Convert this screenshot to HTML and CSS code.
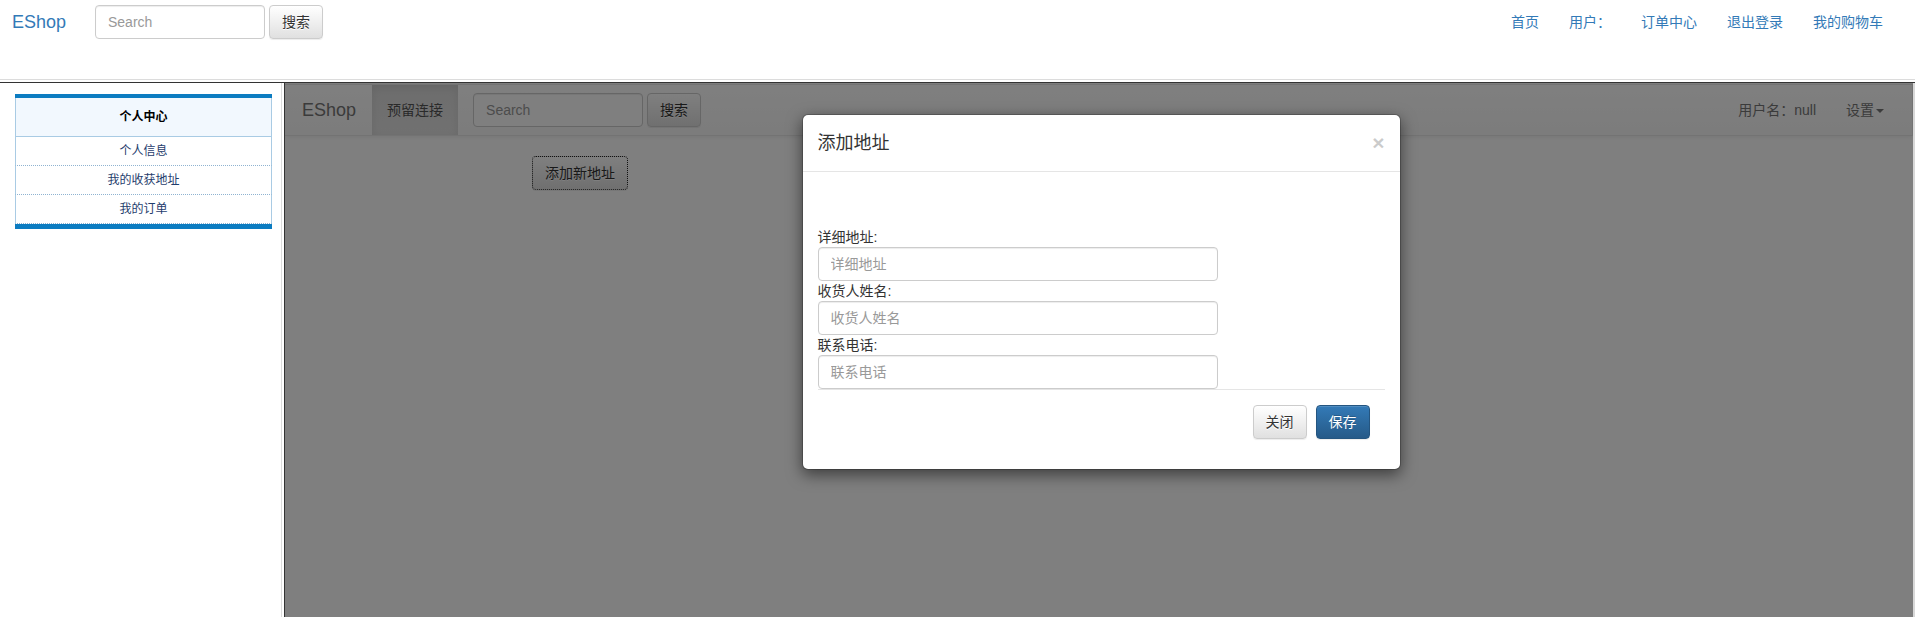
FILE: index.html
```html
<!DOCTYPE html>
<html lang="zh-CN">
<head>
<meta charset="utf-8">
<title>EShop</title>
<link rel="stylesheet" href="styles.css">
</head>
<body>
<div class="page">
  <header class="topbar">
    <div class="toprow">
      <a class="brand" href="#">EShop</a>
      <form class="topsearch">
        <input class="input search-input" type="text" placeholder="Search">
        <button class="btn btn-default" type="button">搜索</button>
      </form>
      <ul class="toplinks">
        <li><a href="#">首页</a></li>
        <li><a href="#">用户：</a></li>
        <li><a href="#">订单中心</a></li>
        <li><a href="#">退出登录</a></li>
        <li><a href="#">我的购物车</a></li>
      </ul>
    </div>
  </header>
  <div class="main">
    <aside class="leftpane">
      <div class="sidebox">
        <div class="sidehead">个人中心</div>
        <a class="sideitem" href="#">个人信息</a>
        <a class="sideitem" href="#">我的收获地址</a>
        <a class="sideitem" href="#">我的订单</a>
      </div>
    </aside>
    <section class="rightpane">
      <nav class="navbar">
        <a class="nav-brand" href="#">EShop</a>
        <a class="nav-item active" href="#">预留连接</a>
        <form class="navbar-form">
          <input class="input search-input" type="text" placeholder="Search">
          <button class="btn btn-default" type="button">搜索</button>
        </form>
        <div class="navbar-right">
          <span class="nav-item">用户名：null</span>
          <a class="nav-item" href="#">设置<span class="caret"></span></a>
        </div>
      </nav>
      <div class="content">
        <button class="btn btn-default btn-focus" type="button">添加新地址</button>
      </div>
      <div class="backdrop"></div>
      <div class="modal-layer">
        <div class="modal">
          <div class="modal-header">
            <h4 class="modal-title">添加地址</h4>
            <button class="close" type="button">×</button>
          </div>
          <form class="modal-body">
            <div class="spacer"></div>
            <label class="field-label">详细地址:</label>
            <input class="input field-input" type="text" placeholder="详细地址">
            <label class="field-label">收货人姓名:</label>
            <input class="input field-input" type="text" placeholder="收货人姓名">
            <label class="field-label">联系电话:</label>
            <input class="input field-input" type="text" placeholder="联系电话">
            <div class="modal-footer">
              <button class="btn btn-default" type="button">关闭</button>
              <button class="btn btn-primary" type="button">保存</button>
            </div>
          </form>
        </div>
      </div>
    </section>
  </div>
</div>
</body>
</html>
```

FILE: styles.css
```css
* { box-sizing: border-box; }
html, body {
  margin: 0;
  padding: 0;
  height: 617px;
  overflow: hidden;
  background: #fff;
  font-family: "Liberation Sans", "Noto Sans CJK SC", sans-serif;
  font-size: 14px;
  line-height: 20px;
  color: #333;
}
a { text-decoration: none; }
ul { list-style: none; margin: 0; padding: 0; }
form { margin: 0; }

.page {
  display: flex;
  flex-direction: column;
  height: 617px;
}

/* ---------- top frame ---------- */
.topbar {
  height: 83px;
  flex: none;
  border-bottom: 1px solid #333;
  box-shadow: inset 0 -2px 0 #fff, inset 0 -3px 0 #dcdcdc;
}
.toprow {
  display: flex;
  align-items: center;
  height: 44px;
  padding-right: 17px;
}
.brand {
  width: 95px;
  padding-left: 12px;
  font-size: 18px;
  line-height: 20px;
  color: #337ab7;
}
.topsearch {
  display: flex;
  gap: 4px;
}
.toplinks {
  display: flex;
  margin-left: auto;
}
.toplinks a {
  display: block;
  padding: 0 15px;
  color: #337ab7;
  font-size: 14px;
  line-height: 20px;
}

/* ---------- form controls ---------- */
.input {
  display: block;
  height: 34px;
  padding: 6px 12px;
  font-family: inherit;
  font-size: 14px;
  line-height: 20px;
  color: #555;
  background: #fff;
  border: 1px solid #ccc;
  border-radius: 4px;
  box-shadow: inset 0 1px 1px rgba(0,0,0,.075);
  outline: none;
}
.input::placeholder { color: #999; }
.search-input { width: 170px; }

.btn {
  display: inline-block;
  height: 34px;
  padding: 6px 12px;
  font-family: inherit;
  font-size: 14px;
  line-height: 20px;
  border: 1px solid transparent;
  border-radius: 4px;
  cursor: pointer;
  white-space: nowrap;
}
.btn-default {
  color: #333;
  background: linear-gradient(to bottom, #fff 0%, #e0e0e0 100%);
  border-color: #ccc;
  text-shadow: 0 1px 0 #fff;
  box-shadow: inset 0 1px 0 rgba(255,255,255,.15), 0 1px 1px rgba(0,0,0,.075);
}
.btn-primary {
  color: #fff;
  background: linear-gradient(to bottom, #337ab7 0%, #265a88 100%);
  border-color: #245580;
  text-shadow: 0 -1px 0 rgba(0,0,0,.2);
  box-shadow: inset 0 1px 0 rgba(255,255,255,.15), 0 1px 1px rgba(0,0,0,.075);
}
.btn-focus {
  border: 1px dotted #222;
}

/* ---------- main frames ---------- */
.main {
  flex: 1;
  display: flex;
  min-height: 0;
}
.leftpane {
  width: 285px;
  flex: none;
  border-right: 1px solid #333;
  box-shadow: inset -2px 0 0 #fff, inset -3px 0 0 #dcdcdc;
  padding: 11px 0 0 15px;
}
.sidebox {
  width: 257px;
  border-top: 4px solid #0c7cc1;
  border-bottom: 5px solid #0c7cc1;
  font-size: 12px;
  line-height: 16px;
}
.sidehead {
  height: 39px;
  display: flex;
  align-items: center;
  justify-content: center;
  background: #f2f8fe;
  border-left: 1px solid #a9cbe4;
  border-right: 1px solid #a9cbe4;
  border-bottom: 1px solid #a9cbe4;
  font-weight: bold;
  color: #000;
}
.sideitem {
  height: 29px;
  display: flex;
  align-items: center;
  justify-content: center;
  border-left: 1px solid #a9cbe4;
  border-right: 1px solid #a9cbe4;
  border-bottom: 1px dotted #8fb3d1;
  color: #1f3d6d;
}

.rightpane {
  flex: 1;
  position: relative;
  overflow: hidden;
  border-right: 2px solid #d8d8d8;
}

.navbar {
  display: flex;
  align-items: flex-start;
  height: 52px;
  margin-top: 1px;
  padding-right: 13px;
  background: linear-gradient(to bottom, #fff 0%, #f8f8f8 100%);
  border: 1px solid #e7e7e7;
  border-left: none;
  box-shadow: inset 0 1px 0 rgba(255,255,255,.15), 0 1px 5px rgba(0,0,0,.075);
}
.nav-brand {
  display: block;
  height: 50px;
  padding: 15px 16px 15px 17px;
  font-size: 18px;
  line-height: 20px;
  color: #777;
}
.nav-item {
  display: block;
  height: 50px;
  padding: 15px;
  color: #777;
  line-height: 20px;
}
.nav-item.active {
  color: #555;
  background: linear-gradient(to bottom, #dbdbdb 0%, #e2e2e2 100%);
  box-shadow: inset 0 3px 9px rgba(0,0,0,.075);
}
.navbar-form {
  display: flex;
  gap: 4px;
  padding: 8px 15px;
}
.navbar-right {
  display: flex;
  margin-left: auto;
}
.caret {
  display: inline-block;
  width: 0;
  height: 0;
  margin-left: 2px;
  vertical-align: middle;
  border-top: 4px solid #777;
  border-right: 4px solid transparent;
  border-left: 4px solid transparent;
}

.content {
  padding: 20px 0 0 247px;
}

.backdrop {
  position: absolute;
  inset: 0;
  background: rgba(0,0,0,.5);
}

.modal-layer {
  position: absolute;
  inset: 0;
  display: flex;
  justify-content: center;
  align-items: flex-start;
  padding: 31px 0 0 4px;
}
.modal {
  width: 599px;
  background: #fff;
  border: 1px solid rgba(0,0,0,.2);
  border-radius: 6px;
  box-shadow: 0 5px 15px rgba(0,0,0,.5);
  background-clip: padding-box;
}
.modal-header {
  display: flex;
  justify-content: space-between;
  align-items: flex-start;
  padding: 15px;
  border-bottom: 1px solid #e5e5e5;
}
.modal-title {
  margin: 0;
  font-size: 18px;
  line-height: 26px;
  font-weight: normal;
  color: #333;
}
.close {
  padding: 0;
  margin-top: 2px;
  background: transparent;
  border: 0;
  font-family: "Liberation Sans", sans-serif;
  font-size: 21px;
  font-weight: bold;
  line-height: 21px;
  color: #000;
  opacity: .2;
  text-shadow: 0 1px 0 #fff;
}
.modal-body {
  padding: 15px;
}
.spacer { height: 40px; }
.field-label {
  display: block;
  height: 20px;
  font-size: 14px;
  line-height: 20px;
  color: #333;
}
.field-input { width: 400px; }
.modal-footer {
  display: flex;
  justify-content: flex-end;
  gap: 9px;
  padding: 15px;
  border-top: 1px solid #e5e5e5;
}
```
